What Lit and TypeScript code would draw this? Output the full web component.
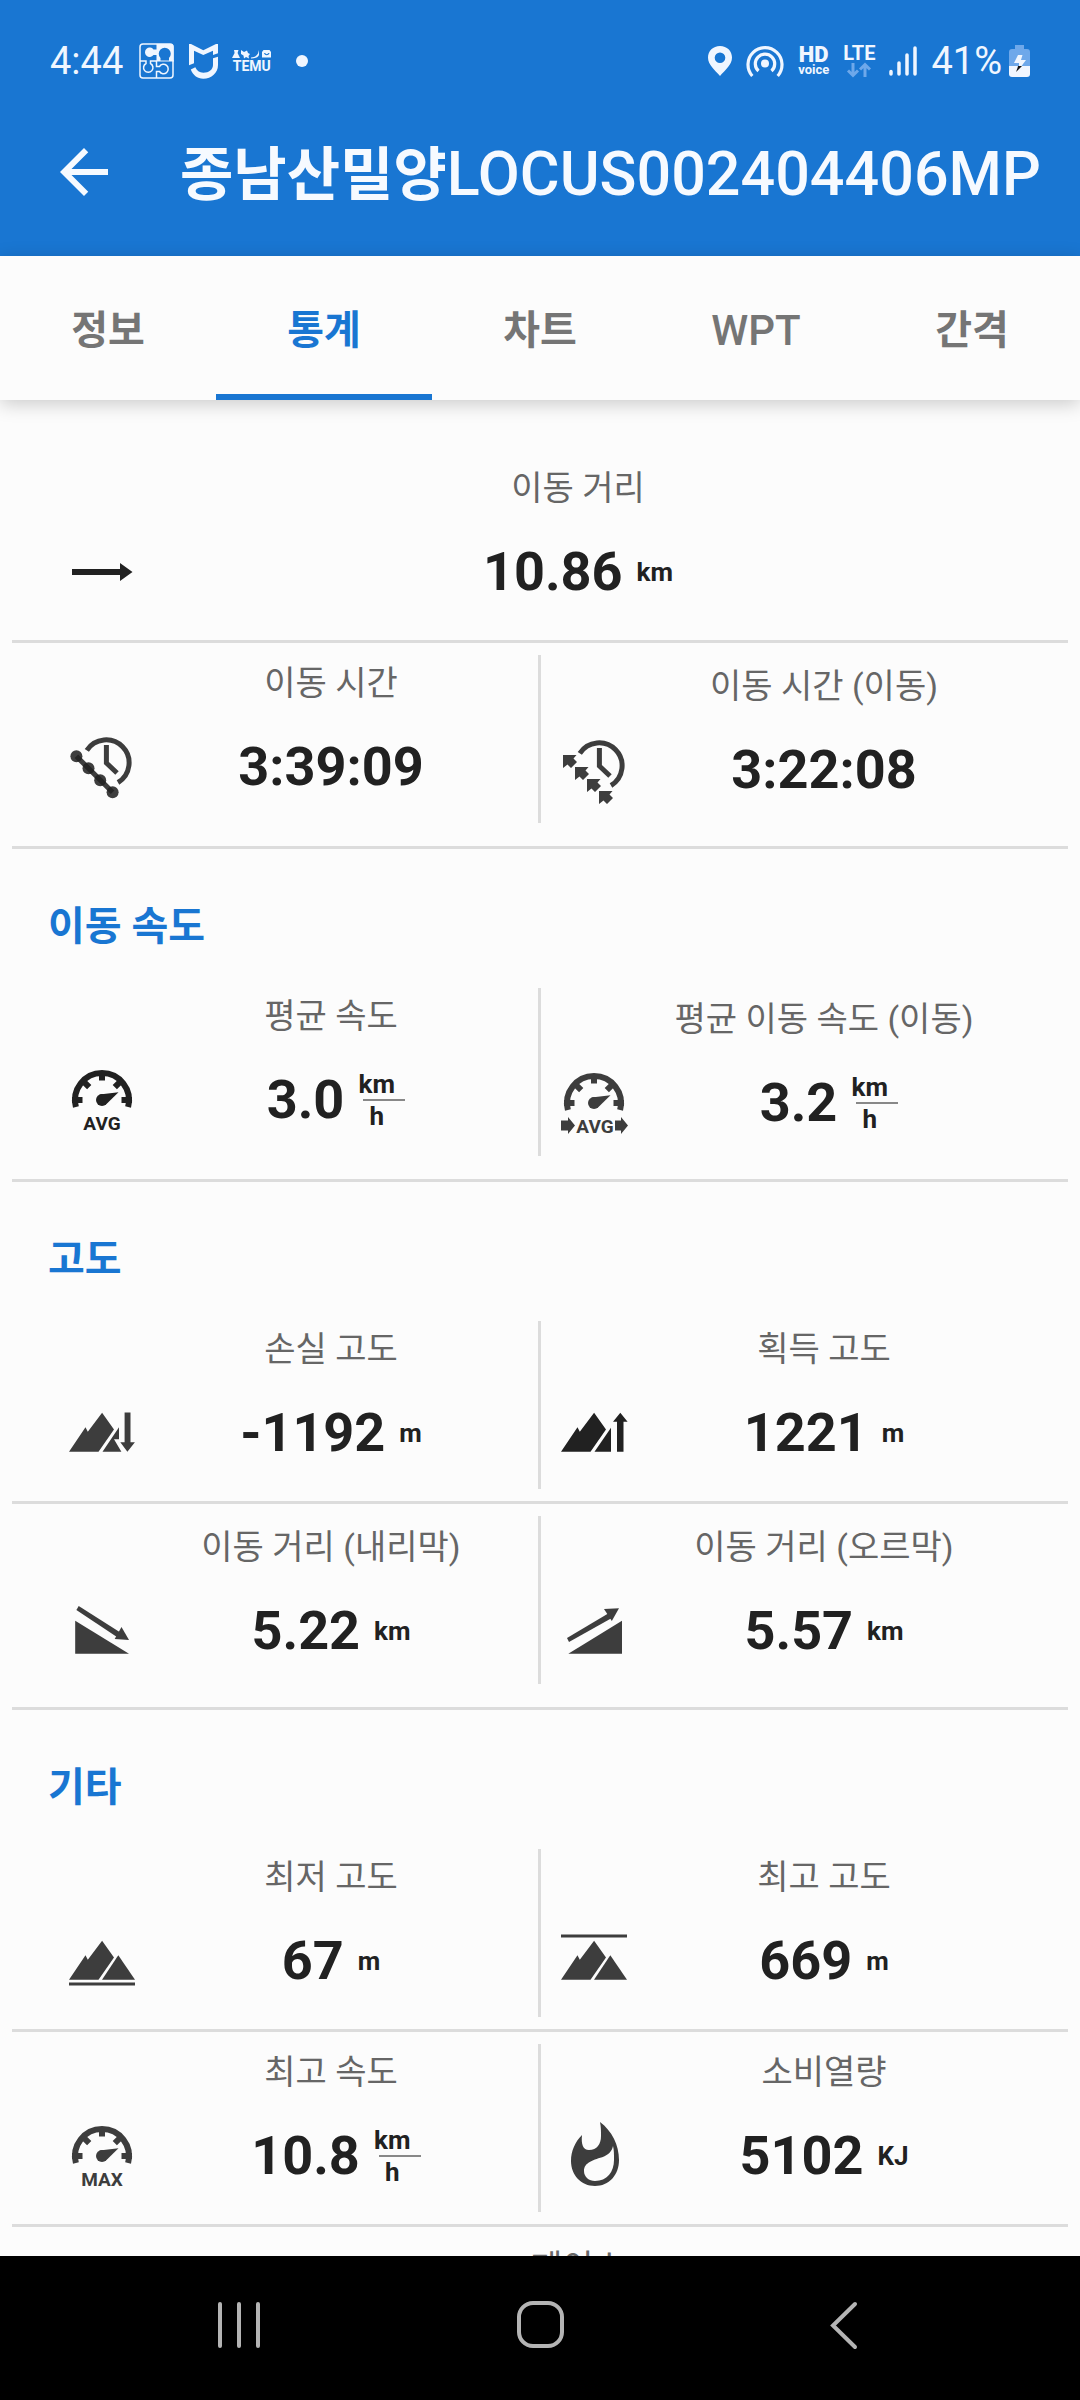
import { LitElement, html, css, svg, nothing, TemplateResult, SVGTemplateResult } from "lit";
import { customElement, property, state } from "lit/decorators.js";
import { classMap } from "lit/directives/class-map.js";

const GAUGE = svg`
  <path d="M9.9 44A27 27 0 1 1 62.1 44" fill="none" stroke="currentColor" stroke-width="6"/>
  <path d="M36 8v9.5M6 37h10.5M66 37H55.5M17.6 18.6l5.6 5.6M54.4 18.6l-5.6 5.6" fill="none" stroke="currentColor" stroke-width="6"/>
  <circle cx="36" cy="37" r="6"/>
  <path d="M52.5 29.3L40.5 41 33.5 31.5z"/>`;

const MOUNTAIN = svg`<path d="M3 55.7L19.5 31.3l2.3 4.4L36.1 16.7 48 33.5 32.5 55.7z"/>`;
const FOOTHILL = svg`<path d="M36 55.7L52.3 31.3 69 55.7z"/>`;

const CLOCK = svg`
  <path d="M20.8 20.3A23 23 0 1 1 52 52.5" fill="none" stroke="currentColor" stroke-width="5"/>
  <path d="M40.4 15v18L51 43" fill="none" stroke="currentColor" stroke-width="5"/>`;

const ICONS: Record<string, SVGTemplateResult> = {
  distance: svg`<path d="M6 34h48v-6l12.5 9L54 46v-6H6z"/>`,
  time: svg`${CLOCK}
    <g fill="#212121" fill-opacity="0.87">
      <path d="M12.2 24.5L48.4 60.5 44.8 64.1 8.6 28.1z"/>
      <circle cx="10.4" cy="26.3" r="6"/><circle cx="22.5" cy="38.3" r="6"/>
      <circle cx="34.2" cy="50.3" r="6"/><circle cx="46.6" cy="62.3" r="6"/>
    </g>`,
  timeMoving: svg`<g transform="translate(1 0)">${CLOCK}</g>
    <path d="M5 22h13.5l-3 3.5 3.5 3.5-6 6-3.5-3.5L5 35z"/>
    <path d="M17 34h13.5l-3 3.5 3.5 3.5-6 6-3.5-3.5L17 47z"/>
    <path d="M29 46h13.5l-3 3.5L43 53l-6 6-3.5-3.5L29 59z"/>
    <path d="M41 58h13.5l-3 3.5L55 65l-6 6-3.5-3.5L41 71z"/>`,
  average: svg`${GAUGE}<text class="tag" x="36" y="67">AVG</text>`,
  averageMoving: svg`${GAUGE}<text class="tag" x="37" y="67">AVG</text>
    <path d="M3 54.5h7V51l7 8.5-7 8.5v-3.5H3zM57 54.5h6V51l7 8.5-7 8.5v-3.5h-6z"/>`,
  max: svg`${GAUGE}<text class="tag" x="36" y="67">MAX</text>`,
  descent: svg`${MOUNTAIN}
    <path d="M36.5 55.7L53 31.3v12h-5l7.4 12.4z"/>
    <path d="M58.6 16.5h5.9v29.8h4.4l-7.5 9.4-7.1-9.4h4.3z"/>`,
  ascent: svg`${MOUNTAIN}
    <path d="M36.5 55.7L53 31.8v23.9z"/>
    <path d="M59 55.7v-30h-4l7.3-9 7.3 9h-4.1v30z"/>`,
  downhill: svg`<path d="M9.2 26.7L63 59.7H9.2z"/>
    <path d="M12.7 12L54 38.3l-2.7 4.9L10.4 16z"/><path d="M55.5 33L63 46l-14.3-1z"/>`,
  uphill: svg`<path d="M64 26.7v33H10.3z"/>
    <path d="M9 44l41.6-24.7 2.8 5L11 48z"/><path d="M46 15l15-.7L53.8 27z"/>`,
  lowest: svg`${MOUNTAIN}${FOOTHILL}<path d="M3 58.5h66v3H3z"/>`,
  highest: svg`${MOUNTAIN}${FOOTHILL}<path d="M3 10.5h66v3H3z"/>`,
  energy: svg`<path fill-rule="evenodd" d="M42 3c12 9 19 23 19 38 0 15-10 26-24 26S13 56 13 42c0-10 4-19 11-26-1 9 1 15 7 15 8 0 12-6 12-14 0-5 0-9-1-14zM55 27c-1 5-4 8-9 10.5C36 41 26 43 26 52c0 6 5 10 11 10 12 0 19-9 19-21 0-6 0-10-1-14z"/>`,
};

interface Stat {
  icon?: string;
  label: string;
  value?: string;
  unit?: string;
  per?: string;
  strong?: boolean;
}

interface Section {
  title?: string;
  rows: Stat[][];
}

const SECTIONS: Section[] = [
  {
    rows: [
      [{ icon: "distance", label: "이동 거리", value: "10.86", unit: "km", strong: true }],
      [
        { icon: "time", label: "이동 시간", value: "3:39:09" },
        { icon: "timeMoving", label: "이동 시간 (이동)", value: "3:22:08" },
      ],
    ],
  },
  {
    title: "이동 속도",
    rows: [
      [
        { icon: "average", label: "평균 속도", value: "3.0", unit: "km", per: "h", strong: true },
        { icon: "averageMoving", label: "평균 이동 속도 (이동)", value: "3.2", unit: "km", per: "h" },
      ],
    ],
  },
  {
    title: "고도",
    rows: [
      [
        { icon: "descent", label: "손실 고도", value: "-1192", unit: "m" },
        { icon: "ascent", label: "획득 고도", value: "1221", unit: "m", strong: true },
      ],
      [
        { icon: "downhill", label: "이동 거리 (내리막)", value: "5.22", unit: "km" },
        { icon: "uphill", label: "이동 거리 (오르막)", value: "5.57", unit: "km" },
      ],
    ],
  },
  {
    title: "기타",
    rows: [
      [
        { icon: "lowest", label: "최저 고도", value: "67", unit: "m" },
        { icon: "highest", label: "최고 고도", value: "669", unit: "m" },
      ],
      [
        { icon: "max", label: "최고 속도", value: "10.8", unit: "km", per: "h" },
        { icon: "energy", label: "소비열량", value: "5102", unit: "KJ" },
      ],
      [{ label: "페이스" }],
    ],
  },
];

@customElement("stat-cell")
class StatCell extends LitElement {
  @property({ attribute: false }) stat!: Stat;

  static styles = css`
    :host { display: block; min-width: 0; }
    .cell {
      display: grid;
      grid-template-columns: 108px minmax(0, 1fr);
      grid-template-rows: auto 72px;
      row-gap: 19px;
      padding-bottom: 21px;
    }
    .cell.noted { padding-top: 3px; padding-bottom: 18px; }
    .label {
      grid-column: 2;
      padding-right: 32px;
      text-align: center;
      white-space: nowrap;
      font-size: 34px;
      line-height: 56px;
      color: #666;
    }
    .icon {
      grid-column: 1;
      grid-row: 2;
      justify-self: center;
      width: 72px;
      height: 72px;
      color: #3d3d3d;
      fill: currentColor;
    }
    .icon.strong { color: #212121; }
    .tag {
      font: 700 19px "Roboto", sans-serif;
      text-anchor: middle;
    }
    .reading {
      grid-column: 2;
      grid-row: 2;
      display: flex;
      align-items: center;
      justify-content: center;
      gap: 14px;
      padding: 2px 32px 0 0;
      color: #212121;
      font-weight: 700;
    }
    .value { font-size: 54px; line-height: 64px; }
    .unit { font-size: 26px; line-height: 30px; }
    .fraction { display: flex; flex-direction: column; align-items: center; }
    .bar { width: 42px; height: 2px; margin: 0 -10px 0 5px; background: #888; }
  `;

  private unit(s: Stat): TemplateResult | typeof nothing {
    if (!s.unit) return nothing;
    if (!s.per) return html`<span class="unit">${s.unit}</span>`;
    return html`<span class="unit fraction">
      <span>${s.unit}</span><span class="bar"></span><span>${s.per}</span>
    </span>`;
  }

  render() {
    const s = this.stat;
    return html`<div class=${classMap({ cell: true, noted: s.label.includes("(") })}>
      <span class="label">${s.label}</span>
      ${s.icon
        ? html`<svg class=${classMap({ icon: true, strong: !!s.strong })} viewBox="0 0 72 72" aria-hidden="true">${ICONS[s.icon]}</svg>`
        : nothing}
      ${s.value ? html`<div class="reading"><span class="value">${s.value}</span>${this.unit(s)}</div>` : nothing}
    </div>`;
  }
}

@customElement("status-bar")
class StatusBar extends LitElement {
  static styles = css`
    :host {
      display: flex;
      justify-content: space-between;
      align-items: center;
      padding: 36px 50px 0 50px;
      height: 50px;
      color: #f0f6ff;
      font-size: 38px;
      line-height: 50px;
    }
    .group { display: flex; align-items: center; gap: 14px; }
    .clock { padding-right: 2px; }
    .power { display: flex; align-items: center; gap: 7px; }
    .dot { width: 12px; height: 12px; margin-left: 11px; border-radius: 50%; background: currentColor; }
    svg { display: block; fill: currentColor; }
    .badge { display: flex; flex-direction: column; align-items: center; font-weight: 700; white-space: nowrap; }
    .hd { font-size: 22px; line-height: 18px; font-weight: 900; }
    .voice { font-size: 13px; line-height: 12px; }
    .lte { font-size: 20px; line-height: 18px; }
    .temu { font-size: 14px; line-height: 14px; }
  `;

  render() {
    return html`
      <div class="group">
        <span class="clock">4:44</span>
        <svg width="36" height="36" viewBox="0 0 36 36" aria-hidden="true">
          <rect x="1" y="1" width="33" height="34" rx="3" fill="none" stroke="currentColor" stroke-width="1.5"/>
          <path d="M17.5 1H32a2.5 2.5 0 0 1 2.5 2.5V18H30v-3a6 6 0 1 0-8.5 0v3h-4v-6h-3a4.7 4.7 0 1 1 0-5.5h3z"/>
          <path d="M1 18h6v2.5a4.7 4.7 0 1 0 4.5 0V18h6v5.5h3a4.7 4.7 0 1 1 0 5h-3V35" fill="none" stroke="currentColor" stroke-width="1.5"/>
          <path d="M17.5 18H35" stroke="currentColor" stroke-width="1"/>
        </svg>
        <svg width="29" height="35" viewBox="0 0 29 35" aria-hidden="true">
          <path d="M0 0h2l12.3 6.3L27 0h2v9.3L24 11V6.7L14.3 11 5 6.7v12.6l-5 2z"/>
          <path d="M24 14.3l5-1.6V21c0 8-6.5 13.7-14.7 13.7-6 0-10.5-3.7-12.5-9.2l4.5-2.2c1.5 3.5 4 5.4 8 5.4 5.7 0 9.7-3.2 9.7-7.7z"/>
        </svg>
        <span class="badge">
          <svg width="39" height="10" viewBox="0 1 39 10" aria-hidden="true">
            <path d="M2 2h4.5L5.6 5 8 10H0l2.6-5zM9 2l3 2 3-1.5L16 5l2 1-1.5 2 .5 2.5-3-1.5-2 1.5-.5-3L9 6zM19 9.5c4 0 5-1.5 7-4l1-3.5v5c-1 2.5-4 3.5-8 3.5z"/>
            <path fill-rule="evenodd" d="M31.5 2h6L39 4v5.5H30V4zM32 5c1 3 4.5 3 5.5 0h-1c-1 1.5-2.5 1.5-3.5 0z"/>
          </svg>
          <span class="temu">TEMU</span>
        </span>
        <span class="dot"></span>
      </div>
      <div class="group">
        <svg width="24" height="32" viewBox="0 0 24 32" aria-hidden="true">
          <path fill-rule="evenodd" d="M12 1C5 1 0 6 0 12.5 0 20 7 25 12 31c5-6 12-11 12-18.5C24 6 19 1 12 1zm0 6.5a5.3 5.3 0 1 1 0 10.6 5.3 5.3 0 0 1 0-10.6z"/>
        </svg>
        <svg width="38" height="34" viewBox="0 0 38 34" aria-hidden="true">
          <circle cx="19" cy="19.5" r="4"/>
          <path d="M12.5 27a9.7 9.7 0 1 1 13 0M6.3 32a17 17 0 1 1 25.4 0" fill="none" stroke="currentColor" stroke-width="3.2"/>
        </svg>
        <span class="badge"><span class="hd">HD</span><span class="voice">voice</span></span>
        <span class="badge">
          <span class="lte">LTE</span>
          <svg width="28" height="16" viewBox="0 0 28 16" aria-hidden="true">
            <path d="M8 1v12M3 8.5l5 5 5-5M20 15V3M15 7.5l5-5 5 5" fill="none" stroke="#6ea8ea" stroke-width="3"/>
          </svg>
        </span>
        <svg width="28" height="32" viewBox="0 0 28 32" aria-hidden="true">
          <path d="M2 26.5V29M10 18v11M18 10v19M26 3v26" stroke="currentColor" stroke-width="3.5" stroke-linecap="round"/>
        </svg>
        <span class="power">
          <span>41%</span>
          <svg width="21" height="34" viewBox="0 0 21 34" aria-hidden="true">
            <path d="M6 1h9v4h3a3 3 0 0 1 3 3v14H0V8a3 3 0 0 1 3-3h3z" fill="#6ea8ea"/>
            <path d="M0 22h21v8a3 3 0 0 1-3 3H3a3 3 0 0 1-3-3z"/>
            <path d="M9 11h4.5L12 16h5l-4.5 6H10v-3H5z"/>
            <path d="M9 22h4l-6 6 1.5-4z" fill="#111"/>
          </svg>
        </span>
      </div>
    `;
  }
}

@customElement("app-root")
class AppRoot extends LitElement {
  @state() private active = 1;

  private tabs = ["정보", "통계", "차트", "WPT", "간격"];

  static styles = css`
    :host {
      display: flex;
      flex-direction: column;
      height: 100vh;
      overflow: hidden;
      background: #fcfcfc;
      font-family: "Roboto", "Noto Sans CJK KR", sans-serif;
    }
    button { border: 0; padding: 0; background: none; font: inherit; color: inherit; cursor: pointer; }
    .header { flex: none; background: #1976d2; color: #f6faff; }
    .toolbar { display: flex; align-items: center; gap: 60px; padding: 38px 36px 36px 48px; }
    .back { display: flex; flex: none; }
    .back svg { width: 72px; height: 72px; fill: currentColor; }
    .title {
      margin: 0;
      padding-top: 4px;
      min-width: 0;
      overflow: hidden;
      white-space: nowrap;
      font-size: 61px;
      font-weight: 500;
      line-height: 92px;
    }
    .place { font-size: 58px; font-weight: 700; line-height: 60px; }
    .tabs {
      flex: none;
      display: grid;
      grid-template-columns: repeat(5, minmax(0, 1fr));
      position: relative;
      z-index: 1;
      box-shadow: 0 4px 18px rgba(0, 0, 0, 0.2);
      background: #fcfcfc;
      color: #757575;
      font-size: 40px;
      font-weight: 700;
      line-height: 48px;
    }
    .tab { padding: 51px 0 39px; border-bottom: 6px solid transparent; }
    .tab.latin { font-size: 42px; font-weight: 500; }
    .tab.active { color: #1976d2; border-bottom-color: #1976d2; }
    .stats { flex: 1; min-height: 0; overflow: hidden; padding: 48px 12px 0; }
    .heading {
      margin: 0;
      padding: 51px 36px 22px;
      font-size: 40px;
      font-weight: 700;
      line-height: 54px;
      color: #1976d2;
    }
    .row {
      display: grid;
      grid-auto-flow: column;
      grid-auto-columns: minmax(0, 1fr);
      padding: 12px 36px;
      border-bottom: 3px solid #dcdcdc;
    }
    .row:last-child { padding-bottom: 23px; }
    .split { border-right: 3px solid #dcdcdc; margin-right: -1px; }
    .nav {
      flex: none;
      display: flex;
      padding: 33px 88px 39px;
      background: #000;
      color: #b4b4b4;
    }
    .key { flex: 1; display: flex; justify-content: center; }
    .key svg { width: 72px; height: 72px; fill: none; stroke: currentColor; stroke-width: 4; }
  `;

  render() {
    return html`
      <header class="header">
        <status-bar></status-bar>
        <div class="toolbar">
          <button class="back" aria-label="뒤로">
            <svg viewBox="0 0 24 24"><path d="M20 11H7.83l5.59-5.59L12 4l-8 8 8 8 1.41-1.41L7.83 13H20v-2z"/></svg>
          </button>
          <h1 class="title"><span class="place">종남산밀양</span>LOCUS002404406MP</h1>
        </div>
      </header>
      <div class="tabs" role="tablist">
        ${this.tabs.map(
          (t, i) => html`<button
            role="tab"
            aria-selected=${i === this.active}
            class=${classMap({ tab: true, active: i === this.active, latin: /^[A-Z]+$/.test(t) })}
            @click=${() => (this.active = i)}
          >${t}</button>`
        )}
      </div>
      <main class="stats">
        ${SECTIONS.map(
          (s) => html`<section>
            ${s.title ? html`<h2 class="heading">${s.title}</h2>` : nothing}
            ${s.rows.map(
              (r) => html`<div class="row">
                ${r.map((c, i) => html`<stat-cell class=${classMap({ split: i < r.length - 1 })} .stat=${c}></stat-cell>`)}
              </div>`
            )}
          </section>`
        )}
      </main>
      <nav class="nav">
        <button class="key" aria-label="최근 앱">
          <svg viewBox="0 0 72 72" stroke-linecap="round"><path d="M17 15v42M36 15v42M55 15v42"/></svg>
        </button>
        <button class="key" aria-label="홈">
          <svg viewBox="0 0 72 72"><rect x="15" y="14" width="43" height="43" rx="14"/></svg>
        </button>
        <button class="key" aria-label="이전">
          <svg viewBox="0 0 72 72" stroke-linecap="round"><path d="M50 15L28 36.5 50 58"/></svg>
        </button>
      </nav>
    `;
  }
}
